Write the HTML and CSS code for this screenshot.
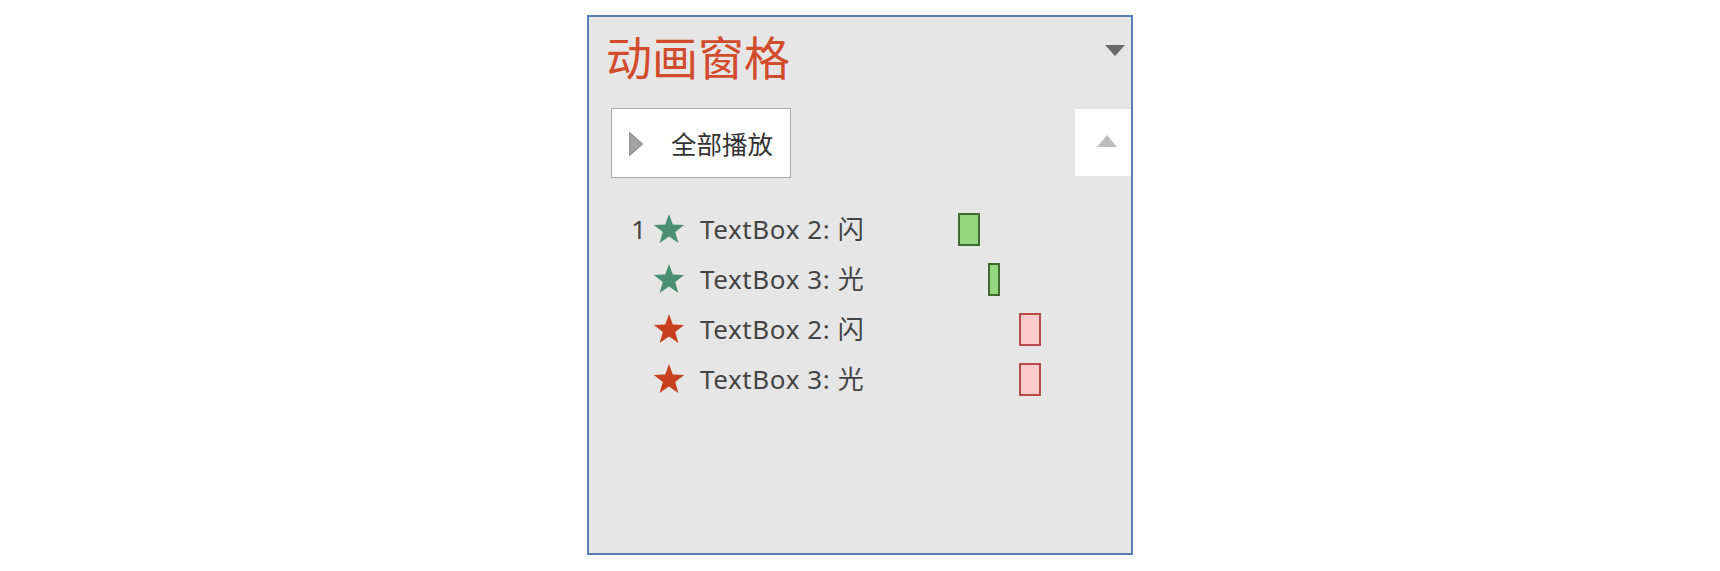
FILE: index.html
```html
<!DOCTYPE html>
<html lang="zh-CN">
<head>
<meta charset="utf-8">
<title>动画窗格</title>
<link rel="stylesheet" href="styles.css">
</head>
<body>
<div class="pane">
  <div class="header">
    <div class="title">动画窗格</div>
    <svg class="dropdown" width="20" height="11" viewBox="0 0 20 11"><polygon points="0,0 20,0 10,11" fill="#6a6a6a"/></svg>
  </div>
  <div class="toolbar">
    <button class="play-all">
      <svg class="play-icon" width="14" height="24" viewBox="0 0 14 24"><polygon points="0.7,0.7 13.3,12 0.7,23.3" fill="#a3a3a3" stroke="#8e8e8e" stroke-width="1.2"/></svg>
      <span class="play-label">全部播放</span>
    </button>
    <div class="scroll-up">
      <svg width="20" height="12" viewBox="0 0 20 12"><polygon points="10,0 20,12 0,12" fill="#bdbdbd"/></svg>
    </div>
  </div>
  <div class="list">
    <div class="row">
      <span class="num">1</span>
      <svg class="star green" viewBox="0 0 32 30"><polygon points="16,0 19.8,10.6 31.2,10.9 22.2,17.9 25.4,29 16,22.5 6.6,29 9.8,17.9 0.8,10.9 12.2,10.6"/></svg>
      <span class="label">TextBox 2: 闪</span>
      <div class="timeline"><div class="bar bar-green" style="margin-left:78px;width:22px"></div></div>
    </div>
    <div class="row">
      <span class="num"></span>
      <svg class="star green" viewBox="0 0 32 30"><polygon points="16,0 19.8,10.6 31.2,10.9 22.2,17.9 25.4,29 16,22.5 6.6,29 9.8,17.9 0.8,10.9 12.2,10.6"/></svg>
      <span class="label">TextBox 3: 光</span>
      <div class="timeline"><div class="bar bar-green" style="margin-left:108px;width:12px"></div></div>
    </div>
    <div class="row">
      <span class="num"></span>
      <svg class="star red" viewBox="0 0 32 30"><polygon points="16,0 19.8,10.6 31.2,10.9 22.2,17.9 25.4,29 16,22.5 6.6,29 9.8,17.9 0.8,10.9 12.2,10.6"/></svg>
      <span class="label">TextBox 2: 闪</span>
      <div class="timeline"><div class="bar bar-red" style="margin-left:139px;width:22px"></div></div>
    </div>
    <div class="row">
      <span class="num"></span>
      <svg class="star red" viewBox="0 0 32 30"><polygon points="16,0 19.8,10.6 31.2,10.9 22.2,17.9 25.4,29 16,22.5 6.6,29 9.8,17.9 0.8,10.9 12.2,10.6"/></svg>
      <span class="label">TextBox 3: 光</span>
      <div class="timeline"><div class="bar bar-red" style="margin-left:139px;width:22px"></div></div>
    </div>
  </div>
</div>
</body>
</html>
```

FILE: styles.css
```css
html, body {
  margin: 0;
  padding: 0;
  background: #ffffff;
}
body {
  padding: 15px 0 0 587px;
  font-family: "Noto Sans", "Noto Sans CJK SC", sans-serif;
}
.pane {
  box-sizing: border-box;
  width: 546px;
  height: 540px;
  background: #e6e6e6;
  border: 2px solid #5a7db3;
  display: flex;
  flex-direction: column;
}
.header {
  display: flex;
  justify-content: space-between;
  align-items: flex-start;
  padding: 15px 6px 0 17px;
}
.title {
  font-family: "Noto Sans CJK SC", sans-serif;
  font-size: 46px;
  line-height: 46px;
  color: #d24b2a;
}
.dropdown {
  margin-top: 13px;
  display: block;
}
.toolbar {
  display: flex;
  justify-content: space-between;
  align-items: flex-start;
  margin-top: 30px;
  padding-left: 22px;
}
.play-all {
  box-sizing: border-box;
  width: 180px;
  height: 70px;
  margin: 0;
  background: #ffffff;
  border: 1px solid #ababab;
  display: flex;
  align-items: center;
  padding: 0 0 0 17px;
  cursor: default;
}
.play-icon {
  display: block;
  margin-top: 1px;
}
.play-label {
  margin-left: 28px;
  font-family: "Noto Sans CJK SC", sans-serif;
  font-size: 25.5px;
  color: #333333;
  line-height: 1;
}
.scroll-up {
  width: 56px;
  height: 67px;
  margin-top: 1px;
  background: #ffffff;
  display: flex;
  align-items: center;
  justify-content: center;
}
.scroll-up svg {
  display: block;
  margin-left: 8px;
  margin-top: -4px;
}
.list {
  margin-top: 26px;
  display: flex;
  flex-direction: column;
}
.row {
  height: 50px;
  display: flex;
  align-items: center;
}
.num {
  width: 57px;
  text-align: right;
  font-size: 26px;
  color: #444444;
  line-height: 1;
}
.star {
  width: 32px;
  height: 30px;
  margin-left: 7px;
  display: block;
}
.star.green { fill: #4a8f74; }
.star.red { fill: #c8401d; }
.label {
  width: 180px;
  margin-left: 15px;
  font-size: 26px;
  letter-spacing: 0.6px;
  color: #444444;
  line-height: 1;
  white-space: nowrap;
}
.timeline {
  flex: 1;
  display: flex;
  align-items: center;
}
.bar {
  box-sizing: border-box;
  height: 33px;
}
.bar-green {
  background: #95d77f;
  border: 2px solid #3f6b32;
}
.bar-red {
  background: #ffcccc;
  border: 2px solid #b84a4a;
}
```
